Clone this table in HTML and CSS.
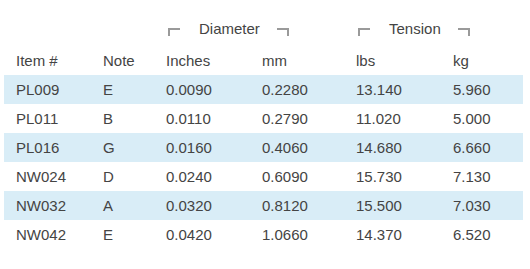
FILE: index.html
```html
<!DOCTYPE html>
<html>
<head>
<meta charset="utf-8">
<link rel="stylesheet" href="styles.css">
</head>
<body>
<div class="wrap">
<table class="specs">
  <colgroup>
    <col class="c-item"><col class="c-note"><col class="c-in"><col class="c-mm"><col class="c-lbs"><col class="c-kg">
  </colgroup>
  <thead>
    <tr class="group">
      <th></th><th></th>
      <th colspan="2"><span class="grp"><span class="br br-l"></span><span class="gl">Diameter</span><span class="br br-r"></span></span></th>
      <th colspan="2"><span class="grp"><span class="br br-l"></span><span class="gl">Tension</span><span class="br br-r"></span></span></th>
    </tr>
    <tr class="cols">
      <th>Item #</th><th>Note</th><th>Inches</th><th>mm</th><th>lbs</th><th>kg</th>
    </tr>
  </thead>
  <tbody>
    <tr class="odd"><td>PL009</td><td>E</td><td>0.0090</td><td>0.2280</td><td>13.140</td><td>5.960</td></tr>
    <tr><td>PL011</td><td>B</td><td>0.0110</td><td>0.2790</td><td>11.020</td><td>5.000</td></tr>
    <tr class="odd"><td>PL016</td><td>G</td><td>0.0160</td><td>0.4060</td><td>14.680</td><td>6.660</td></tr>
    <tr><td>NW024</td><td>D</td><td>0.0240</td><td>0.6090</td><td>15.730</td><td>7.130</td></tr>
    <tr class="odd"><td>NW032</td><td>A</td><td>0.0320</td><td>0.8120</td><td>15.500</td><td>7.030</td></tr>
    <tr><td>NW042</td><td>E</td><td>0.0420</td><td>1.0660</td><td>14.370</td><td>6.520</td></tr>
  </tbody>
</table>
</div>
</body>
</html>
```

FILE: styles.css
```css
html, body {
  margin: 0;
  padding: 0;
  background: #ffffff;
}
.wrap {
  padding: 11px 4px 0 4px;
}
.specs {
  border-collapse: collapse;
  table-layout: fixed;
  width: 519px;
  font-family: "Liberation Sans", Arial, sans-serif;
  font-size: 15px;
  color: #444444;
}
.c-item { width: 87px; }
.c-note { width: 63px; }
.c-in { width: 96px; }
.c-mm { width: 94px; }
.c-lbs { width: 97px; }
.c-kg { width: 82px; }
.specs th, .specs td {
  padding: 0 0 0 12px;
  text-align: left;
  font-weight: normal;
  vertical-align: middle;
  white-space: nowrap;
}
.group th {
  height: 34px;
  padding-left: 14px;
}
.cols th {
  height: 29px;
  padding-top: 1px;
}
.specs td {
  height: 29px;
}
.odd td {
  background: #d9edf7;
}
.grp {
  display: flex;
  align-items: flex-start;
}
.gl {
  margin: 0 17px 0 19px;
  line-height: 17px;
}
.br {
  display: block;
  width: 12px;
  height: 8px;
  margin-top: 8px;
  border-top: 2px solid #9a9a9a;
  box-sizing: border-box;
}
.br-l {
  border-left: 2px solid #9a9a9a;
}
.br-r {
  border-right: 2px solid #9a9a9a;
}
```
